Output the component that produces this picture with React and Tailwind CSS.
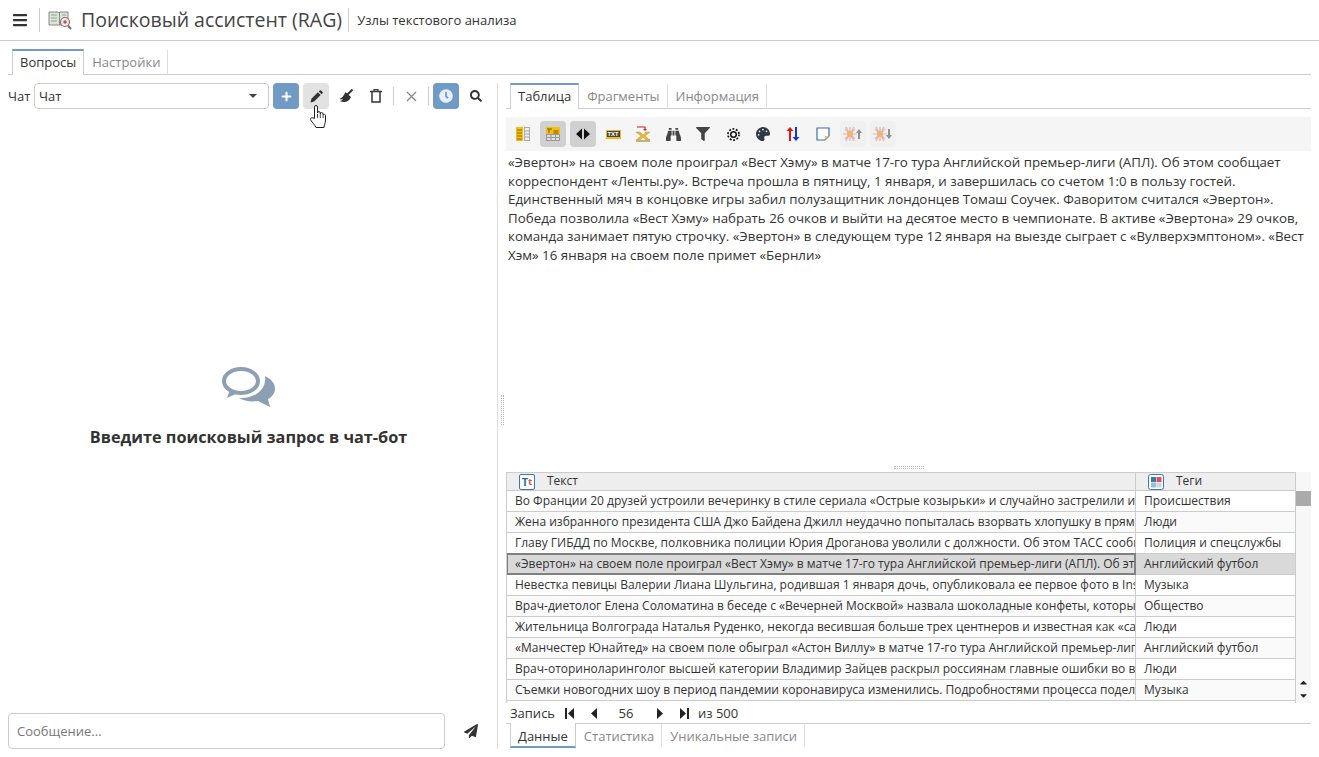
import React from "react";
import {
  FaBars,
  FaPlus,
  FaClock,
  FaSearch,
  FaPaperPlane,
  FaBinoculars,
  FaFilter,
  FaPalette,
  FaCaretDown,
  FaCaretUp,
} from "react-icons/fa";

const rows = [
  ["Во Франции 20 друзей устроили вечеринку в стиле сериала «Острые козырьки» и случайно застрелили именинника", "Происшествия"],
  ["Жена избранного президента США Джо Байдена Джилл неудачно попыталась взорвать хлопушку в прямом эфире", "Люди"],
  ["Главу ГИБДД по Москве, полковника полиции Юрия Дроганова уволили с должности. Об этом ТАСС сообщили в", "Полиция и спецслужбы"],
  ["«Эвертон» на своем поле проиграл «Вест Хэму» в матче 17-го тура Английской премьер-лиги (АПЛ). Об этом сообщает", "Английский футбол"],
  ["Невестка певицы Валерии Лиана Шульгина, родившая 1 января дочь, опубликовала ее первое фото в Instagram", "Музыка"],
  ["Врач-диетолог Елена Соломатина в беседе с «Вечерней Москвой» назвала шоколадные конфеты, которые", "Общество"],
  ["Жительница Волгограда Наталья Руденко, некогда весившая больше трех центнеров и известная как «самая", "Люди"],
  ["«Манчестер Юнайтед» на своем поле обыграл «Астон Виллу» в матче 17-го тура Английской премьер-лиги", "Английский футбол"],
  ["Врач-оториноларинголог высшей категории Владимир Зайцев раскрыл россиянам главные ошибки во время", "Люди"],
  ["Съемки новогодних шоу в период пандемии коронавируса изменились. Подробностями процесса поделились", "Музыка"],
];

const Tab = ({ label, active }) => (
  <div
    className={`h-[26px] -mb-px pb-[2px] flex items-center border-t-2 border-r ${
      active
        ? "px-[7px] border-l border-t-[#6f9bc4] border-x-[#ccc] bg-white text-[#333]"
        : "pl-2 pr-[7px] border-t-transparent border-r-[#ddd] text-[#888]"
    }`}
  >
    {label}
  </div>
);

const BottomTab = ({ label, active }) => (
  <div
    className={`h-[25px] -mt-px pt-[3px] flex items-center border-b-2 border-r ${
      active
        ? "px-[7px] border-l border-b-[#6f9bc4] border-x-[#ccc] bg-white text-[#333]"
        : "pl-2 pr-[7px] border-b-transparent border-r-[#ddd] text-[#888]"
    }`}
  >
    {label}
  </div>
);

const IconBtn = ({ children, className = "" }) => (
  <div className={`w-[26px] h-[26px] shrink-0 rounded-sm flex items-center justify-center ${className}`}>
    {children}
  </div>
);

const Burst = ({ down }) => (
  <svg width="20" height="16" viewBox="0 0 20 16" className="opacity-80">
    <g stroke="#e5a79a" strokeWidth="1.200">
      <path d="M7 1v14M0 8h14M2 3l10 10M12 3L2 13M3 1l8 14M11 1L3 15" />
    </g>
    <circle cx="7" cy="8" r="3" fill="#eda45f" />
    <path d={down ? "M15 3h2v6h2l-3 4-3-4h2z" : "M15 13h2V7h2l-3-4-3 4h2z"} fill="#777" />
  </svg>
);

const tableToolIcons = [
  <svg key="0" width="16" height="16" viewBox="0 0 16 16">
    <rect x="1" y="1" width="7" height="14" fill="#f5bd0d" />
    <path d="M2 4h5M2 7h5M2 10h5M2 13h5" stroke="#8a6b00" />
    <rect x="9.500" y="1.500" width="5" height="13" fill="#eee" stroke="#aaa" />
    <path d="M10 5h4M10 8h4M10 11h4" stroke="#aaa" />
  </svg>,
  <svg key="1" width="16" height="16" viewBox="0 0 16 16">
    <rect x="1" y="1" width="14" height="7" fill="#f5bd0d" />
    <path d="M2 3h5M4 3v4M8.500 5h5M8.500 7h5" stroke="#7a5a00" />
    <rect x="1.500" y="8.500" width="13" height="6" fill="#ddd" stroke="#999" />
    <path d="M2 11.500h12M6 9v5M10.500 9v5" stroke="#999" />
  </svg>,
  <svg key="2" width="16" height="16" viewBox="0 0 16 16">
    <path d="M7 2.500v11L1 8zM9 2.500v11L15 8z" fill="#111" />
  </svg>,
  <div key="3" className="w-[15px] h-[9px] bg-[#f2b90f] flex items-center justify-center">
    <span className="w-[13px] h-[6px] bg-[#444] text-[6px] leading-[6px] font-bold text-white text-center">TXT</span>
  </div>,
  <svg key="4" width="16" height="18" viewBox="0 0 16 18">
    <path d="M2 2h8v3" fill="none" stroke="#d42020" strokeWidth="1.200" />
    <path d="M8 4h4l-2 2z" fill="#d42020" />
    <path d="M1 7h4l3 3 3-3h4l-5 4 5 4H11l-3-3-3 3H1l5-4z" fill="#e9b92b" stroke="#b89c50" strokeWidth=".5" />
    <rect x="1" y="15" width="14" height="2" fill="#c5b27a" />
  </svg>,
  <FaBinoculars key="5" size={15} color="#444" />,
  <FaFilter key="6" size={14} color="#444" />,
  <svg key="7" width="13" height="13" viewBox="0 0 14 14">
    <circle cx="7" cy="7" r="3" fill="none" stroke="#111" strokeWidth="1.600" />
    <circle cx="7" cy="7" r="6" fill="none" stroke="#111" strokeWidth="1.800" strokeDasharray="2 1.770" />
  </svg>,
  <FaPalette key="8" size={14} color="#2f3a44" />,
  <svg key="9" width="16" height="16" viewBox="0 0 16 16">
    <path d="M4 15V5H1.500L5 1l3.500 4H6v10z" fill="#ee1111" />
    <path d="M10 1v10H7.500L11 15l3.500-4H12V1z" fill="#1133dd" />
  </svg>,
  <svg key="10" width="14" height="14" viewBox="0 0 14 14">
    <path d="M1 1h12v8l-4 4H1z" fill="#fff" stroke="#3d6f9f" strokeWidth="1.200" />
    <path d="M13 9H9v4z" fill="#f5c842" />
  </svg>,
  <Burst key="11" />,
  <Burst key="12" down />,
];

const StepIcon = ({ dir, bar }) => (
  <svg width="10" height="11" viewBox="0 0 10 11">
    {bar && <rect x={dir === "l" ? 0 : 8} width="2" height="11" fill="#222" />}
    <path d={dir === "l" ? "M9 0v11L3 5.500z" : "M1 0v11l6-5.500z"} fill="#222" />
  </svg>
);

export default function App() {
  return (
    <div className="h-[757px] w-full flex flex-col overflow-hidden bg-white text-[13px] leading-[18.700px] text-[#333] font-['Open_Sans',sans-serif]">
      {/* Header */}
      <div className="h-[41px] shrink-0 border-b border-[#ccc] flex items-center pl-3">
        <FaBars size={16} color="#333" />
        <div className="w-px h-6 bg-[#ccc] ml-[11px]" />
        <svg width="24" height="22" viewBox="0 0 24 22" className="ml-2">
          <path d="M1 3h9l1 1 1-1h8v13H1z" fill="#dbe5d8" stroke="#888" />
          <path d="M11.500 4v12" stroke="#888" />
          <path d="M3 6h6M3 9h6M3 12h6M14 6h4" stroke="#8aa78a" />
          <circle cx="17" cy="13" r="4.500" fill="#f3e9e9" stroke="#777" strokeWidth="1.200" />
          <circle cx="17" cy="13" r="1.800" fill="#d84b4b" />
          <path d="M20 16.500l3 3.500" stroke="#777" strokeWidth="2" />
        </svg>
        <div className="ml-[9px] text-[19.500px] leading-none text-[#444]">Поисковый ассистент (RAG)</div>
        <div className="w-px h-6 bg-[#ccc] ml-[6px]" />
        <div className="ml-2">Узлы текстового анализа</div>
      </div>

      {/* Main tabs */}
      <div className="h-[34px] shrink-0 mx-2 pl-1 border-b border-[#ccc] flex items-end">
        <Tab label="Вопросы" active />
        <Tab label="Настройки" />
      </div>

      <div className="flex-1 min-h-0 flex px-2">
        {/* Chat pane */}
        <div className="w-[490px] shrink-0 mt-2 mb-2 pr-2 border-r border-[#ddd] flex flex-col">
          <div className="flex items-center h-[26px] shrink-0">
            <span className="w-[26px]">Чат</span>
            <div className="w-[235px] h-[26px] border border-[#ccc] rounded-sm pl-1 pr-[11px] flex items-center justify-between">
              <span>Чат</span>
              <span className="border-x-[4px] border-x-transparent border-t-[4px] border-t-[#444]" />
            </div>
            <div className="flex items-center gap-1 ml-1">
              <IconBtn className="bg-[#6f9bc4]"><FaPlus size={11} color="#fff" /></IconBtn>
              <IconBtn className="bg-[#e2e2e2] relative">
                <svg width="13" height="13" viewBox="0 0 14 14" fill="#333">
                  <path d="M.5 13.500l1-4 7-7 3 3-7 7zM9.500 1.500l1-1a1 1 0 0 1 1.400 0l1.600 1.600a1 1 0 0 1 0 1.400l-1 1z" />
                </svg>
                <svg width="18" height="25" viewBox="0 0 18 25" className="absolute left-[6px] top-[21px] z-10">
                  <path d="M5.500 12V3a1.500 1.500 0 0 1 3 0v6a1.400 1.400 0 0 1 2.800 0v1a1.400 1.400 0 0 1 2.800 0v1a1.300 1.300 0 0 1 2.400 .5V16c0 3-1.500 5.500-1.500 7.500H7c-.5-2-5-6-5.500-8-.4-1.500 1.500-2.500 4-1z" fill="#fff" stroke="#222" strokeWidth="1" />
                  <path d="M8.500 10v4M11.300 10v4M14.100 11v3" stroke="#222" strokeWidth=".8" />
                </svg>
              </IconBtn>
              <IconBtn>
                <svg width="14" height="14" viewBox="0 0 14 14" fill="#333">
                  <path d="M13.500 .5L8.500 5.500" stroke="#333" strokeWidth="2" />
                  <path d="M6.500 3l5.500 5c-1 3-4 5-7 5-1.500 0-2.500-.3-4-1 2-.5 3-1 2.500-2-1 .5-2 .5-3 0 2.500-1 4-3 6-7z" />
                </svg>
              </IconBtn>
              <IconBtn>
                <svg width="12" height="14" viewBox="0 0 12 14" fill="none" stroke="#333">
                  <path d="M0 2.500h12" strokeWidth="1.500" />
                  <path d="M4 2V.7h4V2" strokeWidth="1.200" />
                  <path d="M2 3v10h8V3" strokeWidth="1.500" />
                </svg>
              </IconBtn>
              <div className="w-px h-[18px] bg-[#ccc]" />
              <IconBtn>
                <svg width="11" height="11" viewBox="0 0 11 11" stroke="#888" strokeWidth="1.300">
                  <path d="M1 1l9 9M10 1l-9 9" />
                </svg>
              </IconBtn>
              <div className="w-px h-[18px] bg-[#ccc]" />
              <IconBtn className="bg-[#6f9bc4]"><FaClock size={14} color="#e8eff6" /></IconBtn>
              <IconBtn><FaSearch size={12} color="#333" /></IconBtn>
            </div>
          </div>

          <div className="flex-1 min-h-0 flex flex-col items-center justify-center pb-[7px]">
            <svg width="53" height="40" viewBox="0 0 53 40">
              <ellipse cx="19" cy="14" rx="17" ry="12" fill="none" stroke="#8c9fb3" strokeWidth="4" />
              <path d="M8 23l-3 8 11-5z" fill="#8c9fb3" />
              <path d="M43 9c6 3 10 7 10 13 0 4-3 8-7 10l2 8-12-6c-7 1-14 0-19-3 14 1 28-7 26-22z" fill="#8c9fb3" />
            </svg>
            <div className="mt-[18px] text-[16.250px] leading-6 font-bold text-[#333]">Введите поисковый запрос в чат-бот</div>
          </div>

          <div className="flex items-center shrink-0">
            <input
              placeholder="Сообщение..."
              className="w-[437px] h-[36px] border border-[#ccc] rounded-sm px-2 outline-none placeholder:text-[#777]"
            />
            <div className="flex-1 flex justify-center pl-[7px]">
              <FaPaperPlane size={14} color="#333" />
            </div>
          </div>
        </div>

        {/* Splitter */}
        <div className="w-2 shrink-0 flex items-center justify-center pb-[12px]">
          <div className="w-[3px] h-[30px] border-x border-dotted border-[#bbb]" />
        </div>

        {/* Right pane */}
        <div className="flex-1 min-w-0 flex flex-col pt-2 pb-[9px]">
          <div className="h-[26px] shrink-0 pl-1 border-b border-[#ccc] flex items-end">
            <Tab label="Таблица" active />
            <Tab label="Фрагменты" />
            <Tab label="Информация" />
          </div>

          <div className="mt-2 h-[34px] shrink-0 bg-[#f5f5f5] pl-1 flex items-center gap-1">
            {tableToolIcons.map((icon, i) => (
              <IconBtn
                key={i}
                className={i === 1 || i === 2 ? "bg-[#d0d0d0]" : i > 10 ? "bg-[#f0f0f0]" : ""}
              >
                {icon}
              </IconBtn>
            ))}
          </div>

          <div className="flex-1 min-h-0 px-[2px] pt-[2px] text-[13.330px] leading-[18.600px]">
            «Эвертон» на своем поле проиграл «Вест Хэму» в матче 17-го тура Английской премьер-лиги (АПЛ). Об этом сообщает корреспондент «Ленты.ру». Встреча прошла в пятницу, 1 января, и завершилась со счетом 1:0 в пользу гостей. Единственный мяч в концовке игры забил полузащитник лондонцев Томаш Соучек. Фаворитом считался «Эвертон». Победа позволила «Вест Хэму» набрать 26 очков и выйти на десятое место в чемпионате. В активе «Эвертона» 29 очков, команда занимает пятую строчку. «Эвертон» в следующем туре 12 января на выезде сыграет с «Вулверхэмптоном». «Вест Хэм» 16 января на своем поле примет «Бернли»
          </div>

          <div className="h-[10px] shrink-0 flex items-center justify-center">
            <div className="w-[30px] h-[3px] border-y border-dotted border-[#bbb]" />
          </div>

          {/* Grid */}
          <div className="h-[231px] shrink-0 flex text-[12px]">
            <div className="w-[790px] border-x border-t border-[#ccc] overflow-hidden">
              <div className="h-[18px] flex bg-[#eee] border-b border-[#ccc]">
                <div className="w-[629px] shrink-0 flex items-center pl-[12px] border-r border-[#ccc]">
                  <span className="w-4 h-4 mr-3 border border-[#3d78a8] rounded-[2px] bg-white flex items-center justify-center text-[11px] font-bold leading-none text-[#2c6d9e]">
                    T<span className="text-[9px] text-[#d84b4b]">t</span>
                  </span>
                  <span>Текст</span>
                </div>
                <div className="flex-1 flex items-center pl-[12px]">
                  <svg width="16" height="16" viewBox="0 0 16 16" className="mr-3">
                    <rect x=".5" y=".5" width="15" height="15" rx="2" fill="#fff" stroke="#3d78a8" />
                    <rect x="3" y="3" width="5" height="5" fill="#3d78a8" />
                    <rect x="8.500" y="3" width="5" height="5" fill="#e05050" />
                    <rect x="3" y="8.500" width="5" height="5" fill="#9dbcd6" />
                    <rect x="8.500" y="8.500" width="5" height="5" fill="#c6d6e4" />
                  </svg>
                  <span>Теги</span>
                </div>
              </div>
              {rows.map(([text, tag], i) => {
                const selected = i === 3;
                return (
                  <div
                    key={i}
                    className={`h-[21px] flex border-b border-[#ccc] ${selected ? "bg-[#d9d9d9]" : i % 2 ? "bg-[#fafafa]" : "bg-white"}`}
                  >
                    <div
                      className={`shrink-0 flex items-center overflow-hidden whitespace-nowrap ${
                        selected
                          ? "w-[630px] border-2 border-[#808080] -my-px -ml-px pl-[7px] h-[22px]"
                          : "w-[629px] border-r border-[#ccc] pl-2"
                      }`}
                    >
                      {text}
                    </div>
                    <div className="flex-1 pl-2 flex items-center whitespace-nowrap">{tag}</div>
                  </div>
                );
              })}
            </div>
            <div className="flex-1 bg-[#f7f7f7] flex flex-col items-center">
              <div className="h-[19px] w-full" />
              <div className="h-[15px] w-full bg-[#aaa]" />
              <div className="flex-1" />
              <FaCaretUp size={11} color="#222" />
              <FaCaretDown size={11} color="#222" className="mt-[2px] mb-[2px]" />
            </div>
          </div>

          {/* Pager */}
          <div className="h-5 shrink-0 flex items-center pl-1">
            <span className="w-[55px]">Запись</span>
            <StepIcon dir="l" bar />
            <span className="ml-[13px] flex"><StepIcon dir="l" /></span>
            <span className="w-[56px] text-center">56</span>
            <span className="ml-[2px] flex"><StepIcon dir="r" /></span>
            <span className="ml-[13px] flex"><StepIcon dir="r" bar /></span>
            <span className="ml-[9px]">из 500</span>
          </div>

          <div className="h-[25px] shrink-0 pl-1 border-t border-[#ccc] flex items-start">
            <BottomTab label="Данные" active />
            <BottomTab label="Статистика" />
            <BottomTab label="Уникальные записи" />
          </div>
        </div>
      </div>
    </div>
  );
}
